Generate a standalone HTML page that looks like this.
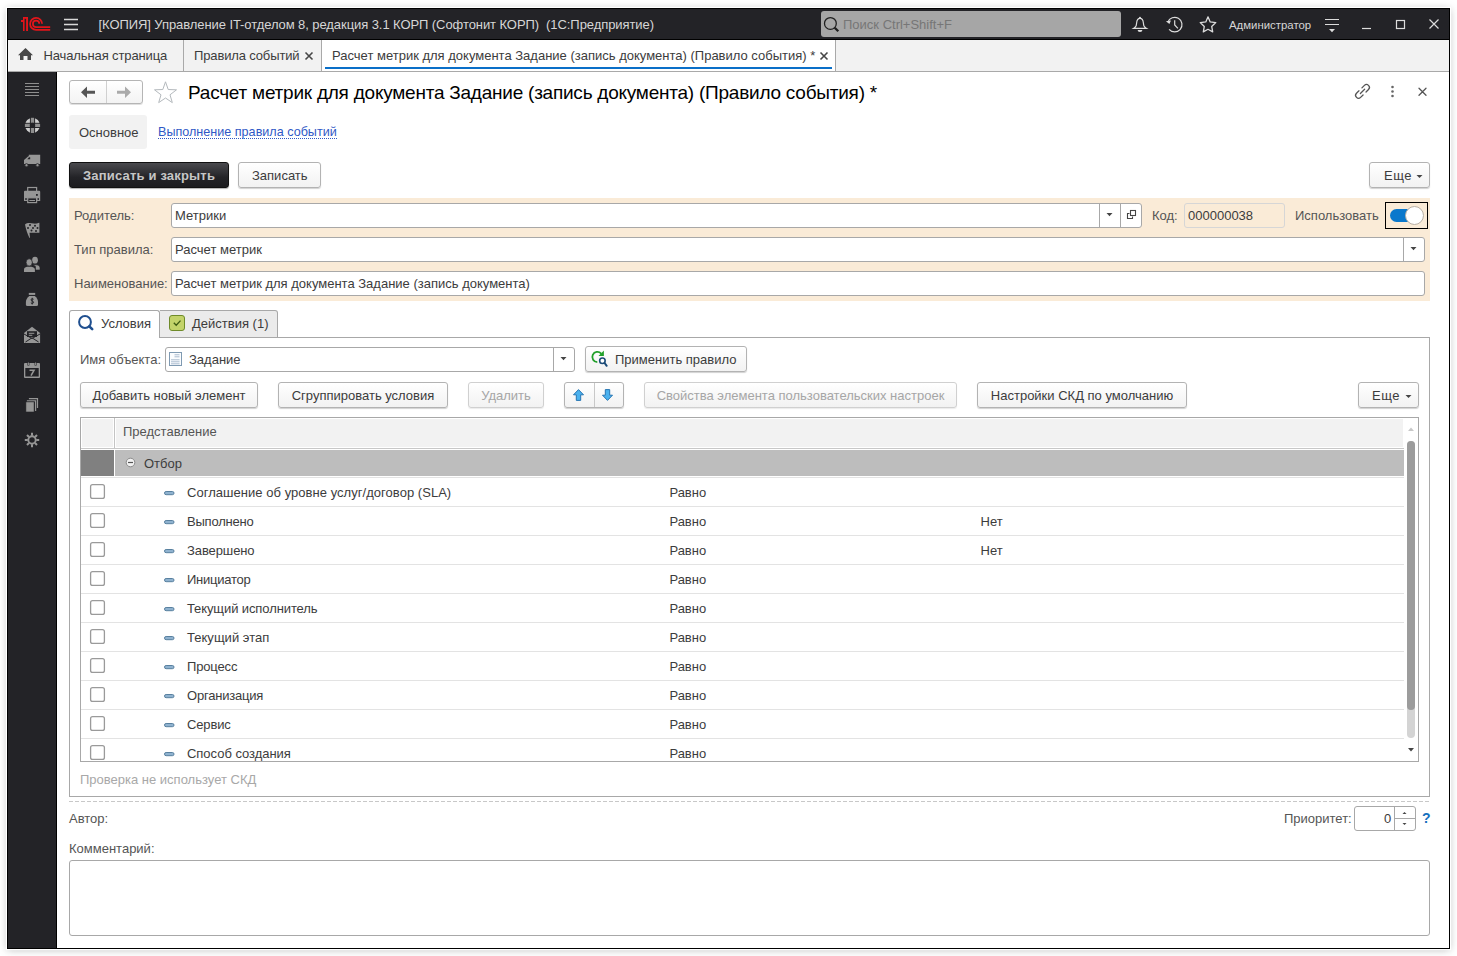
<!DOCTYPE html>
<html><head><meta charset="utf-8">
<style>
*{box-sizing:border-box}
html,body{margin:0;padding:0}
body{width:1457px;height:956px;position:relative;overflow:hidden;background:#fff;font-family:"Liberation Sans",sans-serif;font-size:13px;color:#555}
.a{position:absolute}
.t{position:absolute;white-space:nowrap;line-height:16px}
svg{position:absolute;overflow:visible}
#win{left:7px;top:8px;width:1443px;height:941px;border:1px solid #000;box-shadow:0 0 1px 1px #fff,0 1px 8px rgba(0,0,0,.26);background:#fff}
#hdr{left:8px;top:9px;width:1441px;height:31px;background:#232327;border-bottom:1px solid #000}
#tabs{left:8px;top:40px;width:1441px;height:32px;background:#f2f2f2;border-bottom:1px solid #a9a9a9}
#side{left:8px;top:72px;width:49px;height:876px;background:#232327;border-right:1px solid #000}
.btn{position:absolute;border:1px solid #b3b3b3;border-radius:3px;background:linear-gradient(#fff,#f2f2f2);box-shadow:0 1px 1px rgba(0,0,0,.18);color:#3c3c3c;text-align:center;line-height:23px;white-space:nowrap}
.fld{position:absolute;border:1px solid #a8a8a8;border-radius:3px;background:#fff;color:#3c3c3c}
</style></head><body>
<div id="win" class="a"></div>
<div id="hdr" class="a"></div>
<div id="tabs" class="a"></div>
<div id="side" class="a"></div>

<!-- HEADER -->
<svg style="left:0;top:0" width="1" height="1">
 <g fill="#e3151a">
  <rect x="23" y="17" width="5" height="1.8"/>
  <rect x="23" y="17" width="1.6" height="14"/>
  <rect x="26.1" y="17" width="1.9" height="14"/>
  <rect x="21" y="20" width="2.5" height="2"/>
 </g>
 <g stroke="#e3151a" stroke-width="1.75" fill="none">
  <path d="M42.1,23.8 A6,6 0 1 0 36.1,29.9 H50.2"/>
  <path d="M39.3,23.8 A3.2,3.2 0 1 0 36.1,27.1 H50.2"/>
 </g>
 <g stroke="#d9d9d9" stroke-width="1.4">
  <path d="M64,19.5H78M64,24.5H78M64,29.5H78"/>
 </g>
</svg>
<div class="t" style="left:98.5px;top:16.5px;color:#d6d6d6;letter-spacing:-0.075px">[КОПИЯ] Управление IT-отделом 8, редакция 3.1 КОРП (Софтонит КОРП)&nbsp; (1С:Предприятие)</div>
<div class="a" style="left:821px;top:11px;width:300px;height:26px;background:#a6a6a6;border-radius:3px"></div>
<svg style="left:0;top:0" width="1" height="1">
 <g stroke="#1e1e1e" stroke-width="1.5" fill="none">
  <circle cx="830.4" cy="23.4" r="5.9" stroke-width="1.25"/>
  <path d="M834.7,27.7 L838.3,31.3" stroke-width="2.3"/>
 </g>
</svg>
<div class="t" style="left:843px;top:16.5px;color:#767676">Поиск Ctrl+Shift+F</div>
<!-- header icons -->
<svg style="left:0;top:0" width="1" height="1">
 <g stroke="#dcdcdc" stroke-width="1.2" fill="none">
  <path d="M1140,18.3 C1137.6,18.3 1136.9,20 1136.7,22.5 L1136.2,25.6 C1135.8,27 1134.3,27.8 1133.4,28.4 H1146.6 C1145.7,27.8 1144.2,27 1143.8,25.6 L1143.3,22.5 C1143.1,20 1142.4,18.3 1140,18.3 Z"/>
  <path d="M1167.84,22.1 A7.3,7.3 0 1 1 1169.1,29.3"/>
  <path d="M1174.7,20.3 V25 L1177.9,28.3"/>
  <path d="M1208,16.8 L1210.2,21.9 L1215.8,22.6 L1211.7,26.4 L1212.7,31.9 L1208,29.3 L1203.3,31.9 L1204.3,26.4 L1200.2,22.6 L1205.8,21.9 Z" stroke-linejoin="round" stroke-width="1.3"/>
  <path d="M1325,19.5H1339M1325,24.5H1339"/>
  <path d="M1362,28.5H1371"/>
  <rect x="1396.5" y="20.5" width="8" height="8"/>
  <path d="M1429.5,19.5L1438.5,28.5M1438.5,19.5L1429.5,28.5"/>
 </g>
 <path d="M1165.9,21.2 L1171,20.4 L1169.4,24Z" fill="#dcdcdc"/><circle cx="1140" cy="17.7" r="1" fill="#dcdcdc"/>
 <path d="M1137.6,30 H1142.4 A2.4,2 0 0 1 1137.6,30Z" fill="#dcdcdc"/>
 <path d="M1329,29 H1335 L1332,32.2Z" fill="#dcdcdc"/>
</svg>
<div class="t" style="left:1229px;top:17px;color:#d6d6d6;font-size:11.4px">Администратор</div>

<!-- TABS -->
<div class="a" style="left:183px;top:40px;width:1px;height:31px;background:#a9a9a9"></div>
<div class="a" style="left:321px;top:40px;width:1px;height:31px;background:#a9a9a9"></div>
<div class="a" style="left:322px;top:40px;width:513px;height:31px;background:#fff"></div>
<div class="a" style="left:835px;top:40px;width:1px;height:31px;background:#a9a9a9"></div>
<div class="a" style="left:325px;top:67px;width:507px;height:2px;background:#0a6fc8"></div>
<svg style="left:0;top:0" width="1" height="1">
 <path d="M18,55.3 L25.5,48 L33,55.3 L31,55.3 L31,60 L27.5,60 L27.5,56 L23.5,56 L23.5,60 L20,60 L20,55.3 Z" fill="#474747"/>
 <g stroke="#474747" stroke-width="1.6">
  <path d="M305.5,52.5L312.5,59.5M312.5,52.5L305.5,59.5"/>
  <path d="M820.5,52.5L827.5,59.5M827.5,52.5L820.5,59.5"/>
 </g>
</svg>
<div class="t" style="left:43.5px;top:47.5px;color:#3c3c3c;letter-spacing:-0.12px">Начальная страница</div>
<div class="t" style="left:194px;top:47.5px;color:#3c3c3c;letter-spacing:-0.14px">Правила событий</div>
<div class="t" style="left:332px;top:47.5px;color:#3c3c3c">Расчет метрик для документа Задание (запись документа) (Правило события) *</div>


<!-- SIDEBAR ICONS -->
<svg style="left:0;top:0" width="1" height="1">
 <g stroke="#8e8e8e" stroke-width="1.1">
  <path d="M25,83.5H39M25,86.5H39M25,89.5H39M25,92.5H39M25,95.5H39"/>
 </g>
 <!-- lifebuoy -->
 <g transform="translate(32.5,125.4)">
  <circle r="7.5" fill="#cfcfcf"/>
  <rect x="-1.6" y="-7.6" width="3.2" height="15.2" fill="#8f8f8f"/>
  <rect x="-7.6" y="-1.6" width="15.2" height="3.2" fill="#8f8f8f"/>
  <path d="M-2.1,-8V8M2.1,-8V8M-8,-2.1H8M-8,2.1H8" stroke="#232327" stroke-width="1"/>
  <circle r="2.6" fill="#232327"/>
 </g>
 <!-- truck -->
 <path d="M28.8,154.8 H40.2 V164 H24 V160 L28.3,156.2 H28.8Z" fill="#969696"/>
 <path d="M27.3,159.2 L29,157.3 H30.2 V159.2Z" fill="#232327"/>
 <circle cx="26.5" cy="165.2" r="1.6" fill="#969696" stroke="#232327" stroke-width=".8"/>
 <circle cx="37.5" cy="165.2" r="1.6" fill="#969696" stroke="#232327" stroke-width=".8"/>
 <!-- printer -->
 <rect x="27.7" y="187.5" width="8.9" height="5.3" fill="none" stroke="#969696" stroke-width="1.2"/>
 <path d="M25,190.8 H39.2 a1,1 0 0 1 1,1 V201 H37 V198 H27.2 V201 H24 V191.8 a1,1 0 0 1 1,-1Z" fill="#969696"/>
 <rect x="36" y="194" width="1.8" height="1.8" fill="#232327"/>
 <rect x="25.2" y="198.2" width="1.6" height="1.7" fill="#232327"/>
 <rect x="37.4" y="198.2" width="1.6" height="1.7" fill="#232327"/>
 <rect x="27.7" y="197.8" width="8.9" height="4.8" fill="#232327" stroke="#969696" stroke-width="1.2"/>
 <path d="M29.3,200.5H35" stroke="#969696" stroke-width="1"/>
 <!-- flag -->
 <path d="M25,224.5 C27,222.5 31,223 33.5,223.6 C35.5,224 37,223.5 39.4,222.8 V232.8 H29.5 L30,237.8 L29.5,238 C27.5,234 26,230 25,224.5Z" fill="#969696"/>
 <g fill="#232327"><circle cx="30" cy="225" r="1"/><circle cx="35" cy="225.8" r="1"/><circle cx="28" cy="228" r="1"/><circle cx="33" cy="228" r="1"/><circle cx="37.5" cy="228" r="1"/><circle cx="31.5" cy="230.5" r="1"/><circle cx="36" cy="231" r="1"/></g>
 <!-- people -->
 <ellipse cx="35" cy="260.2" rx="2.9" ry="3.4" fill="#969696"/>
 <path d="M33,264.8 H37 C39,265.5 40,266.5 40,268 V270 H35.5 V266.5Z" fill="#969696" stroke="#232327" stroke-width=".6"/>
 <ellipse cx="29.2" cy="262.4" rx="3.1" ry="3.6" fill="#969696" stroke="#232327" stroke-width=".7"/>
 <path d="M27,266.8 H31.5 C33.5,267.3 34.9,268 34.9,269.5 V272 H24 V269.5 C24,268 25,267.3 27,266.8Z" fill="#969696"/>
 <!-- money bag -->
 <rect x="28.8" y="292.9" width="6.4" height="2" fill="#969696"/>
 <path d="M29.3,295.9 H34.8 C36.8,297.5 38,299.5 38,302 V304.5 a1.5,1.5 0 0 1 -1.5,1.5 H27.4 a1.5,1.5 0 0 1 -1.5,-1.5 V302 C25.9,299.5 27.3,297.5 29.3,295.9Z" fill="#969696"/>
 <path d="M33.6,299.3 C33,298.6 31,298.6 31,299.9 C31,301.3 33.6,300.8 33.6,302.3 C33.6,303.7 31.4,303.6 30.8,302.9 M32.2,297.8V304.5" stroke="#232327" stroke-width="1" fill="none"/>
 <!-- envelope -->
 <path d="M24,333 L32,326.8 L40.1,333 V343 H24Z" fill="#969696"/>
 <rect x="27" y="331.2" width="10" height="5.8" fill="#232327"/>
 <path d="M28.8,333.3h5.5M28.8,335.3h3.5" stroke="#969696" stroke-width="1"/>
 <path d="M25.5,342 L32,337.8 L38.6,342 M24,334 L32,338.5 L40,334" stroke="#232327" stroke-width="1" fill="none"/>
 <!-- calendar -->
 <path fill-rule="evenodd" d="M25,363 H39 a1,1 0 0 1 1,1 V377 a1,1 0 0 1 -1,1 H25 a1,1 0 0 1 -1,-1 V364 a1,1 0 0 1 1,-1Z M25.3,368 H38.7 V376.6 H25.3Z" fill="#969696"/>
 <path d="M28.4,362.2v3.2M35.6,362.2v3.2" stroke="#232327" stroke-width="2"/>
 <path d="M28.4,362.5v2.5M35.6,362.5v2.5" stroke="#969696" stroke-width="1"/>
 <path d="M29.5,370.3H34 L31,375.6" stroke="#969696" stroke-width="1.6" fill="none"/>
 <!-- docs -->
 <path d="M28.9,398.6 H37.5 V407.9 M26.9,400.8 H35.6 V411" stroke="#969696" stroke-width="1.2" fill="none"/>
 <rect x="25.9" y="401.9" width="8.2" height="10.1" fill="#969696" stroke="#232327" stroke-width=".6"/>
 <!-- gear -->
 <g transform="translate(32,440)">
  <circle r="3.7" stroke="#969696" stroke-width="1.9" fill="none"/>
  <g stroke="#969696" stroke-width="2">
   <path d="M0,-7.2V-4.2M0,7.2V4.2M-7.2,0H-4.2M7.2,0H4.2M-5,-5L-3,-3M5,5L3,3M-5,5L-3,3M5,-5L3,-3"/>
  </g>
 </g>
</svg>

<!-- FORM HEADER -->
<div class="a" style="left:69px;top:80px;width:74px;height:24px;border:1px solid #b5b5b5;border-radius:3px;background:linear-gradient(#fff,#f3f3f3);box-shadow:0 1px 0 rgba(0,0,0,.12)"></div>
<div class="a" style="left:106px;top:81px;width:1px;height:22px;background:#d0d0d0"></div>
<svg style="left:0;top:0" width="1" height="1">
 <path d="M81,92.2 L87,86.5 V90.7 H95 V93.7 H87 V98 Z" fill="#555"/>
 <path d="M131,92.2 L125,86.5 V90.7 H117 V93.7 H125 V98 Z" fill="#aaa"/>
 <path d="M165.5,81.8 L168.2,89.5 L176.5,89.8 L170,94.8 L172.3,102.6 L165.5,98 L158.7,102.6 L161,94.8 L154.5,89.8 L162.8,89.5 Z" fill="none" stroke="#b4b9bd" stroke-width="1"/>
</svg>
<div class="t" style="left:188px;top:81.5px;font-size:19px;line-height:22px;color:#000;letter-spacing:-0.235px">Расчет метрик для документа Задание (запись документа) (Правило события) *</div>
<svg style="left:0;top:0" width="1" height="1">
 <g stroke="#555" stroke-width="1.3" fill="none" stroke-linecap="round">
  <g transform="translate(1362.5,91.4) rotate(-45)"><path d="M2.1,-2.9 H5.6 A2.9,2.9 0 0 1 5.6,2.9 H2.1"/><path d="M-2.1,-2.9 H-5.6 A2.9,2.9 0 0 0 -5.6,2.9 H-2.1"/><path d="M-3,0 H3"/></g>
  <path d="M1419,88.3 L1426,95.3 M1426,88.3 L1419,95.3"/>
 </g>
 <g fill="#666"><circle cx="1392.5" cy="87" r="1.3"/><circle cx="1392.5" cy="91.5" r="1.3"/><circle cx="1392.5" cy="96" r="1.3"/></g>
</svg>

<div class="a" style="left:69px;top:115px;width:78px;height:34px;background:#f2f2f2;border-radius:3px"></div>
<div class="t" style="left:79px;top:124.5px;color:#3c3c3c">Основное</div>
<div class="t" style="left:158px;top:127px;color:#2f58c6;font-size:12.6px;border-bottom:1px dotted #2f58c6;line-height:11px">Выполнение правила событий</div>

<div class="a" style="left:69px;top:162px;width:160px;height:26px;border:1px solid #111;border-radius:3px;background:linear-gradient(#4a4a4e,#232327 60%,#1c1c1f);box-shadow:0 1px 1px rgba(0,0,0,.3)"></div>
<div class="t" style="left:83px;top:167.5px;color:#c6c6c6;font-weight:bold;letter-spacing:0.18px">Записать и закрыть</div>
<div class="btn" style="left:238px;top:162px;width:83px;height:26px"></div>
<div class="t" style="left:252px;top:167.5px;color:#3c3c3c">Записать</div>
<div class="btn" style="left:1369px;top:162px;width:61px;height:26px"></div>
<div class="t" style="left:1384px;top:167.5px;color:#3c3c3c;letter-spacing:0.5px">Еще</div>
<svg style="left:0;top:0" width="1" height="1"><path d="M1416.5,175 h6 l-3,3z" fill="#444"/></svg>

<!-- ORANGE GROUP -->
<div class="a" style="left:69px;top:198px;width:1361px;height:103px;background:#faebd7"></div>
<div class="t" style="left:74px;top:207.5px">Родитель:</div>
<div class="t" style="left:74px;top:241.5px">Тип правила:</div>
<div class="t" style="left:74px;top:275.5px">Наименование:</div>
<div class="fld" style="left:171px;top:203px;width:971px;height:25px"></div>
<div class="a" style="left:1099px;top:204px;width:1px;height:23px;background:#a8a8a8"></div>
<div class="a" style="left:1120px;top:204px;width:1px;height:23px;background:#a8a8a8"></div>
<div class="t" style="left:175px;top:207.5px;color:#3c3c3c">Метрики</div>
<svg style="left:0;top:0" width="1" height="1">
 <path d="M1106.5,213 h6 l-3,3.2z" fill="#444"/>
 <g stroke="#444" stroke-width="1.1" fill="none">
  <rect x="1130.5" y="210.5" width="5" height="5"/>
  <path d="M1129.5,213.5 H1127.5 V218.5 H1132.5 V216.5"/>
 </g>
</svg>
<div class="t" style="left:1152px;top:207.5px">Код:</div>
<div class="a" style="left:1184px;top:203px;width:101px;height:25px;border:1px solid #d6d6d6;border-radius:3px"></div>
<div class="t" style="left:1188px;top:207.5px;color:#3c3c3c">000000038</div>
<div class="t" style="left:1295px;top:207.5px">Использовать</div>
<div class="a" style="left:1385px;top:202px;width:43px;height:27px;border:1px solid #000"></div>
<div class="a" style="left:1390px;top:209px;width:24px;height:13px;border-radius:7px;background:#0a78cc"></div>
<div class="a" style="left:1405px;top:206px;width:19px;height:19px;border-radius:50%;background:#fff;border:1px solid #b8b0a6"></div>

<div class="fld" style="left:171px;top:237px;width:1254px;height:25px"></div>
<div class="a" style="left:1403px;top:238px;width:1px;height:23px;background:#a8a8a8"></div>
<div class="t" style="left:175px;top:241.5px;color:#3c3c3c">Расчет метрик</div>
<svg style="left:0;top:0" width="1" height="1"><path d="M1410.5,247 h6 l-3,3.2z" fill="#444"/></svg>

<div class="fld" style="left:171px;top:271px;width:1254px;height:25px"></div>
<div class="t" style="left:175px;top:275.5px;color:#3c3c3c">Расчет метрик для документа Задание (запись документа)</div>

<!-- TABS PANEL -->
<div class="a" style="left:69px;top:337px;width:1361px;height:460px;border:1px solid #a8a8a8"></div>
<div class="a" style="left:69px;top:310px;width:91px;height:28px;border:1px solid #a8a8a8;border-bottom:none;border-radius:3px 3px 0 0;background:#fff"></div>
<div class="a" style="left:160px;top:310px;width:118px;height:28px;border:1px solid #a8a8a8;border-left:none;border-radius:0 3px 0 0;background:#ebebeb"></div>
<svg style="left:0;top:0" width="1" height="1">
 <circle cx="85" cy="322" r="5.9" fill="none" stroke="#1f4f8f" stroke-width="2"/>
 <path d="M89.3,326.3 L92.2,329.2" stroke="#1f4f8f" stroke-width="2.6" stroke-linecap="round"/>
 <rect x="169.5" y="315.5" width="15" height="15" rx="2.5" fill="#c3d36a" stroke="#6f8b2a" stroke-width="1"/>
 <path d="M173.8,322.8 L176.2,325.2 L180.5,320.6" fill="none" stroke="#3d5a12" stroke-width="1.3"/>
</svg>
<div class="t" style="left:101px;top:315.5px;color:#3c3c3c">Условия</div>
<div class="t" style="left:192px;top:315.5px;color:#3c3c3c">Действия (1)</div>

<div class="t" style="left:80px;top:351.5px">Имя объекта:</div>
<div class="fld" style="left:165px;top:347px;width:410px;height:25px"></div>
<div class="a" style="left:553px;top:348px;width:1px;height:23px;background:#a8a8a8"></div>
<svg style="left:0;top:0" width="1" height="1">
 <path d="M560.5,357 h6 l-3,3.2z" fill="#444"/>
 <rect x="169.5" y="352.5" width="12" height="13" fill="#fbfdff" stroke="#7f9ab2" stroke-width="1"/>
 <path d="M174.5,354.8h5M174.5,356.8h5M171,359.8h8.6M171,361.8h8.6M171,363.8h8.6" stroke="#9fb4c8" stroke-width="0.9"/>
</svg>
<div class="t" style="left:189px;top:351.5px;color:#3c3c3c">Задание</div>
<div class="btn" style="left:585px;top:346px;width:162px;height:26px"></div>
<svg style="left:0;top:0" width="1" height="1">
 <path d="M597.3,362.1 A5.1,5.1 0 1 1 601.2,353.6" fill="none" stroke="#22a02a" stroke-width="1.8"/>
 <path d="M603.9,350.6 L603.9,356.1 L598.5,356.1 Z" fill="#22a02a"/>
 <circle cx="602.4" cy="360.8" r="2.75" fill="#fff" stroke="#1b4b78" stroke-width="1.6"/>
 <path d="M604.6,363 L606.7,365.8" stroke="#1b4b78" stroke-width="2" stroke-linecap="round"/>
</svg>
<div class="t" style="left:615px;top:351.5px;color:#3c3c3c">Применить правило</div>

<div class="btn" style="left:80px;top:382px;width:178px;height:26px;line-height:24px;padding-top:1px">Добавить новый элемент</div>
<div class="btn" style="left:278px;top:382px;width:170px;height:26px;line-height:24px;padding-top:1px">Сгруппировать условия</div>
<div class="btn" style="left:468px;top:382px;width:76px;height:26px;line-height:24px;padding-top:1px;color:#a6a6a6;border-color:#d0d0d0;box-shadow:0 1px 1px rgba(0,0,0,.08)">Удалить</div>
<div class="btn" style="left:564px;top:382px;width:60px;height:26px"></div>
<div class="a" style="left:594px;top:383px;width:1px;height:24px;background:#c8c8c8"></div>
<svg style="left:0;top:0" width="1" height="1">
 <path d="M578.5,389.6 L583.5,394.8 H580.7 V400.4 H576.3 V394.8 H573.5 Z" fill="#4ab1ee" stroke="#2775b2" stroke-width="1"/>
 <path d="M607.5,400.4 L612.5,395.2 H609.7 V389.6 H605.3 V395.2 H602.5 Z" fill="#4ab1ee" stroke="#2775b2" stroke-width="1"/>
</svg>
<div class="btn" style="left:644px;top:382px;width:313px;height:26px;line-height:24px;padding-top:1px;color:#a6a6a6;border-color:#d0d0d0;box-shadow:0 1px 1px rgba(0,0,0,.08)">Свойства элемента пользовательских настроек</div>
<div class="btn" style="left:977px;top:382px;width:210px;height:26px;line-height:24px;padding-top:1px">Настройки СКД по умолчанию</div>
<div class="btn" style="left:1358px;top:382px;width:61px;height:26px"></div>
<div class="t" style="left:1372px;top:387.5px;color:#3c3c3c;letter-spacing:0.5px">Еще</div>
<svg style="left:0;top:0" width="1" height="1"><path d="M1405.5,395 h6 l-3,3z" fill="#444"/></svg>

<!-- TABLE -->
<div class="a" style="left:80px;top:417px;width:1339px;height:345px;border:1px solid #a8a8a8;background:#fff;overflow:hidden">
 <div class="a" style="left:0;top:0;width:33px;height:30px;background:#f2f2f2;border:1px solid #fff"></div>
 <div class="a" style="left:33px;top:0;width:1px;height:30px;background:#c4c4c4"></div>
 <div class="a" style="left:34px;top:0;width:1289px;height:30px;background:#f2f2f2;border:1px solid #fff"></div>
 <div class="a" style="left:0;top:30px;width:1323px;height:1px;background:#c8c8c8"></div>
 <div class="a" style="left:0;top:32px;width:33px;height:26px;background:#808080"></div>
 <div class="a" style="left:34px;top:32px;width:1289px;height:26px;background:#bdbdbd"></div>
 <div class="a" style="left:0;top:59px;width:1323px;height:1px;background:#e3e3e3"></div>
 <div class="a" style="left:0;top:88px;width:1323px;height:1px;background:#e3e3e3"></div>
 <div class="a" style="left:0;top:117px;width:1323px;height:1px;background:#e3e3e3"></div>
 <div class="a" style="left:0;top:146px;width:1323px;height:1px;background:#e3e3e3"></div>
 <div class="a" style="left:0;top:175px;width:1323px;height:1px;background:#e3e3e3"></div>
 <div class="a" style="left:0;top:204px;width:1323px;height:1px;background:#e3e3e3"></div>
 <div class="a" style="left:0;top:233px;width:1323px;height:1px;background:#e3e3e3"></div>
 <div class="a" style="left:0;top:262px;width:1323px;height:1px;background:#e3e3e3"></div>
 <div class="a" style="left:0;top:291px;width:1323px;height:1px;background:#e3e3e3"></div>
 <div class="a" style="left:0;top:320px;width:1323px;height:1px;background:#e3e3e3"></div>
</div>
<div class="t" style="left:123px;top:423.5px">Представление</div>
<div class="t" style="left:144px;top:455.5px;color:#3c3c3c">Отбор</div>
<svg style="left:0;top:0" width="1" height="1">
 <circle cx="130.5" cy="462.5" r="4.3" fill="#f2f2f2" stroke="#8a8a8a" stroke-width="1"/>
 <path d="M128,462.5H133" stroke="#555" stroke-width="1.2"/>
</svg>
<div class="t" style="left:187px;top:484.5px;color:#3c3c3c;letter-spacing:0.038px">Соглашение об уровне услуг/договор (SLA)</div>
<div class="t" style="left:669.4px;top:484.5px;color:#3c3c3c">Равно</div>
<div class="t" style="left:187px;top:513.5px;color:#3c3c3c;letter-spacing:-0.200px">Выполнено</div>
<div class="t" style="left:669.4px;top:513.5px;color:#3c3c3c">Равно</div>
<div class="t" style="left:980.5px;top:513.5px;color:#3c3c3c">Нет</div>
<div class="t" style="left:187px;top:542.5px;color:#3c3c3c;letter-spacing:-0.100px">Завершено</div>
<div class="t" style="left:669.4px;top:542.5px;color:#3c3c3c">Равно</div>
<div class="t" style="left:980.5px;top:542.5px;color:#3c3c3c">Нет</div>
<div class="t" style="left:187px;top:571.5px;color:#3c3c3c;letter-spacing:-0.237px">Инициатор</div>
<div class="t" style="left:669.4px;top:571.5px;color:#3c3c3c">Равно</div>
<div class="t" style="left:187px;top:600.5px;color:#3c3c3c;letter-spacing:-0.100px">Текущий исполнитель</div>
<div class="t" style="left:669.4px;top:600.5px;color:#3c3c3c">Равно</div>
<div class="t" style="left:187px;top:629.5px;color:#3c3c3c;letter-spacing:0.027px">Текущий этап</div>
<div class="t" style="left:669.4px;top:629.5px;color:#3c3c3c">Равно</div>
<div class="t" style="left:187px;top:658.5px;color:#3c3c3c;letter-spacing:-0.150px">Процесс</div>
<div class="t" style="left:669.4px;top:658.5px;color:#3c3c3c">Равно</div>
<div class="t" style="left:187px;top:687.5px;color:#3c3c3c;letter-spacing:-0.210px">Организация</div>
<div class="t" style="left:669.4px;top:687.5px;color:#3c3c3c">Равно</div>
<div class="t" style="left:187px;top:716.5px;color:#3c3c3c;letter-spacing:-0.140px">Сервис</div>
<div class="t" style="left:669.4px;top:716.5px;color:#3c3c3c">Равно</div>
<div class="t" style="left:187px;top:745.5px;color:#3c3c3c;letter-spacing:-0.029px">Способ создания</div>
<div class="t" style="left:669.4px;top:745.5px;color:#3c3c3c">Равно</div>
<svg style="left:0;top:0" width="1" height="1">
 <rect x="90.6" y="484.6" width="13.8" height="13.8" rx="2" fill="#fff" stroke="#9a9a9a" stroke-width="1.3"/>
 <rect x="164.5" y="491.5" width="9.5" height="3.2" rx="1.6" fill="#8fb2cf" stroke="#58809f" stroke-width="1"/>
 <rect x="90.6" y="513.6" width="13.8" height="13.8" rx="2" fill="#fff" stroke="#9a9a9a" stroke-width="1.3"/>
 <rect x="164.5" y="520.5" width="9.5" height="3.2" rx="1.6" fill="#8fb2cf" stroke="#58809f" stroke-width="1"/>
 <rect x="90.6" y="542.6" width="13.8" height="13.8" rx="2" fill="#fff" stroke="#9a9a9a" stroke-width="1.3"/>
 <rect x="164.5" y="549.5" width="9.5" height="3.2" rx="1.6" fill="#8fb2cf" stroke="#58809f" stroke-width="1"/>
 <rect x="90.6" y="571.6" width="13.8" height="13.8" rx="2" fill="#fff" stroke="#9a9a9a" stroke-width="1.3"/>
 <rect x="164.5" y="578.5" width="9.5" height="3.2" rx="1.6" fill="#8fb2cf" stroke="#58809f" stroke-width="1"/>
 <rect x="90.6" y="600.6" width="13.8" height="13.8" rx="2" fill="#fff" stroke="#9a9a9a" stroke-width="1.3"/>
 <rect x="164.5" y="607.5" width="9.5" height="3.2" rx="1.6" fill="#8fb2cf" stroke="#58809f" stroke-width="1"/>
 <rect x="90.6" y="629.6" width="13.8" height="13.8" rx="2" fill="#fff" stroke="#9a9a9a" stroke-width="1.3"/>
 <rect x="164.5" y="636.5" width="9.5" height="3.2" rx="1.6" fill="#8fb2cf" stroke="#58809f" stroke-width="1"/>
 <rect x="90.6" y="658.6" width="13.8" height="13.8" rx="2" fill="#fff" stroke="#9a9a9a" stroke-width="1.3"/>
 <rect x="164.5" y="665.5" width="9.5" height="3.2" rx="1.6" fill="#8fb2cf" stroke="#58809f" stroke-width="1"/>
 <rect x="90.6" y="687.6" width="13.8" height="13.8" rx="2" fill="#fff" stroke="#9a9a9a" stroke-width="1.3"/>
 <rect x="164.5" y="694.5" width="9.5" height="3.2" rx="1.6" fill="#8fb2cf" stroke="#58809f" stroke-width="1"/>
 <rect x="90.6" y="716.6" width="13.8" height="13.8" rx="2" fill="#fff" stroke="#9a9a9a" stroke-width="1.3"/>
 <rect x="164.5" y="723.5" width="9.5" height="3.2" rx="1.6" fill="#8fb2cf" stroke="#58809f" stroke-width="1"/>
 <rect x="90.6" y="745.6" width="13.8" height="13.8" rx="2" fill="#fff" stroke="#9a9a9a" stroke-width="1.3"/>
 <rect x="164.5" y="752.5" width="9.5" height="3.2" rx="1.6" fill="#8fb2cf" stroke="#58809f" stroke-width="1"/>
</svg>
<!-- scrollbar -->
<div class="a" style="left:1407px;top:441px;width:8px;height:297px;border-radius:4px;background:#d4d4d4"></div>
<div class="a" style="left:1407px;top:441px;width:8px;height:269px;border-radius:4px;background:#9c9c9c"></div>
<svg style="left:0;top:0" width="1" height="1">
 <path d="M1408,431 h6 l-3,-3.5z" fill="#c8c8c8"/>
 <path d="M1408,748 h6 l-3,3.5z" fill="#444"/>
</svg>
<!-- table clip bottom cover -->
<div class="a" style="left:80px;top:761px;width:1339px;height:1px;background:#a8a8a8"></div>
<div class="a" style="left:81px;top:762px;width:1347px;height:34px;background:#fff"></div>
<div class="t" style="left:80px;top:771.5px;color:#a8a8a8">Проверка не использует СКД</div>

<!-- BOTTOM -->
<div class="a" style="left:69px;top:801px;width:1361px;height:1px;background:repeating-linear-gradient(90deg,#c8c8c8 0 4px,transparent 4px 6px)"></div>
<div class="t" style="left:69px;top:810.5px">Автор:</div>
<div class="t" style="left:1284px;top:810.5px">Приоритет:</div>
<div class="fld" style="left:1354px;top:806px;width:62px;height:25px"></div>
<div class="a" style="left:1394px;top:807px;width:1px;height:23px;background:#a8a8a8"></div>
<div class="a" style="left:1395px;top:818px;width:20px;height:1px;background:#a8a8a8"></div>
<div class="t" style="left:1384px;top:810.5px;color:#3c3c3c">0</div>
<svg style="left:0;top:0" width="1" height="1">
 <path d="M1402.5,814 h4 l-2,-2z" fill="#444"/>
 <path d="M1402.5,823 h4 l-2,2z" fill="#444"/>
</svg>
<div class="t" style="left:1422px;top:810px;color:#1670be;font-size:14px;font-weight:bold">?</div>
<div class="t" style="left:69px;top:840.5px">Комментарий:</div>
<div class="fld" style="left:69px;top:860px;width:1361px;height:76px"></div>
</body></html>
